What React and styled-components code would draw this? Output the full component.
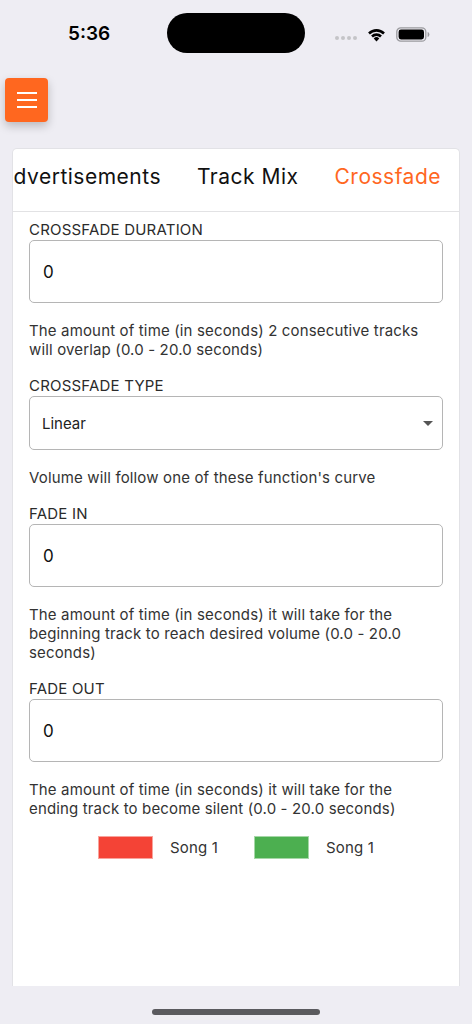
import styled, { createGlobalStyle } from 'styled-components'

const GlobalStyle = createGlobalStyle`
  body {
    margin: 0;
    background: #EEEDF3;
    font-family: Inter, "Noto Sans", sans-serif;
  }
`

const fields = [
  { label: 'CROSSFADE DURATION', value: '0', help: 'The amount of time (in seconds) 2 consecutive tracks will overlap (0.0 - 20.0 seconds)' },
  { label: 'CROSSFADE TYPE', value: 'Linear', select: true, help: "Volume will follow one of these function's curve" },
  { label: 'FADE IN', value: '0', help: 'The amount of time (in seconds) it will take for the beginning track to reach desired volume (0.0 - 20.0 seconds)' },
  { label: 'FADE OUT', value: '0', help: 'The amount of time (in seconds) it will take for the ending track to become silent (0.0 - 20.0 seconds)' },
]

// the tab strip is scrolled to its end, so the first tab is clipped on the left
const tabs = ['Advertisements', 'Track Mix', 'Crossfade']

function WifiIcon() {
  return (
    <svg width="21" height="15" viewBox="0 0 20 15">
      <path d="M10 14.5 L7.2 11.4 A4 4 0 0 1 12.8 11.4 Z" fill="#000" />
      <path d="M4.6 8.6 A7.6 7.6 0 0 1 15.4 8.6 L13.6 10.5 A5 5 0 0 0 6.4 10.5 Z" fill="#000" />
      <path d="M1.6 5.6 A11.8 11.8 0 0 1 18.4 5.6 L16.6 7.5 A9.2 9.2 0 0 0 3.4 7.5 Z" fill="#000" />
    </svg>
  )
}

function BatteryIcon() {
  return (
    <svg width="34" height="15" viewBox="0 0 34 15">
      <rect x="0.8" y="0.8" width="29" height="13.4" rx="4" fill="none" stroke="#9a9a9e" strokeWidth="1.3" />
      <rect x="2.6" y="2.6" width="25.4" height="9.8" rx="2.4" fill="#000" />
      <path d="M31.6 5 Q33.4 5.4 33.4 7.5 Q33.4 9.6 31.6 10 Z" fill="#9a9a9e" />
    </svg>
  )
}

function App() {
  return (
    <>
      <GlobalStyle />
      <Screen>
        <StatusBar>
          <Time>5:36</Time>
          <Island />
          <StatusIcons>
            <Dots>
              <Dot /><Dot /><Dot /><Dot />
            </Dots>
            <WifiIcon />
            <BatteryIcon />
          </StatusIcons>
        </StatusBar>

        <MenuButton>
          <MenuLine /><MenuLine /><MenuLine />
        </MenuButton>

        <Card>
          <TabBar>
            {tabs.map(it => (
              <Tab key={it} $active={it === 'Crossfade'}>{it}</Tab>
            ))}
          </TabBar>

          <Form>
            {fields.map(it => (
              <FieldGroup key={it.label}>
                <Label>{it.label}</Label>
                {it.select ? (
                  <SelectBox>
                    <SelectText>{it.value}</SelectText>
                    <Caret />
                  </SelectBox>
                ) : (
                  <InputBox>{it.value}</InputBox>
                )}
                <HelpText>{it.help}</HelpText>
              </FieldGroup>
            ))}

            <Legend>
              <LegendItem>
                <Swatch $color="#F44336" $border="#f8a39c" />
                <LegendText>Song 1</LegendText>
              </LegendItem>
              <LegendItem>
                <Swatch $color="#4CAF50" $border="#a5d7a7" />
                <LegendText>Song 1</LegendText>
              </LegendItem>
            </Legend>
          </Form>
        </Card>

        <HomeIndicator />
      </Screen>
    </>
  )
}

export default App;

const Screen = styled.div`
  width: 472px;
  height: 1024px;
  display: flex;
  flex-direction: column;
  overflow: hidden;
`

const StatusBar = styled.div`
  display: flex;
  align-items: center;
  padding-top: 13px;
  height: 40px;
`

const Time = styled.div`
  width: 167px;
  box-sizing: border-box;
  padding-left: 68px;
  font-size: 19px;
  font-weight: 600;
  color: #000;
`

const Island = styled.div`
  width: 138px;
  height: 40px;
  border-radius: 20px;
  background: #000;
`

const StatusIcons = styled.div`
  display: flex;
  align-items: center;
  padding-left: 30px;
  padding-top: 2px;
  gap: 9px;
`

const Dots = styled.div`
  display: flex;
  gap: 2px;
  padding-top: 8px;
`

const Dot = styled.span`
  width: 4px;
  height: 4px;
  border-radius: 2px;
  background: #c4c4c8;
`

const MenuButton = styled.div`
  margin: 25px 0 0 5px;
  width: 43px;
  height: 44px;
  border-radius: 4px;
  background: #FF671F;
  box-shadow: 0 4px 10px rgba(0, 0, 0, 0.22);
  display: flex;
  flex-direction: column;
  align-items: center;
  justify-content: center;
  gap: 5px;
`

const MenuLine = styled.span`
  width: 20px;
  height: 2px;
  background: #fff;
`

const Card = styled.div`
  margin: 26px 12px 0;
  height: 838px;
  background: #fff;
  border: 1px solid #e2e2e6;
  border-bottom: none;
  border-radius: 5px 5px 0 0;
  box-sizing: border-box;
  overflow: hidden;
`

const TabBar = styled.div`
  display: flex;
  justify-content: flex-end;
  align-items: center;
  height: 63px;
  box-sizing: border-box;
  padding-bottom: 8px;
  border-bottom: 1px solid #e2e2e4;
  overflow: hidden;
`

const Tab = styled.div`
  flex-shrink: 0;
  padding: 0 18px;
  font-size: 21px;
  letter-spacing: 0.5px;
  color: ${p => p.$active ? '#FF671F' : '#111'};
`

const Form = styled.div`
  padding: 9px 16px 0;
  display: flex;
  flex-direction: column;
  gap: 18px;
`

const FieldGroup = styled.div`
  display: flex;
  flex-direction: column;
`

const Label = styled.div`
  font-size: 15px;
  line-height: 17px;
  letter-spacing: 0.2px;
  color: #2b2b2b;
  margin-bottom: 2px;
`

const InputBox = styled.div`
  height: 63px;
  flex-shrink: 0;
  box-sizing: border-box;
  border: 1px solid #b5b5b5;
  border-radius: 5px;
  display: flex;
  align-items: center;
  padding-left: 13px;
  font-size: 17px;
  color: #111;
`

const SelectBox = styled.div`
  height: 54px;
  flex-shrink: 0;
  box-sizing: border-box;
  border: 1px solid #b5b5b5;
  border-radius: 5px;
  display: flex;
  align-items: center;
  justify-content: space-between;
  padding: 0 9px 0 12px;
`

const SelectText = styled.span`
  font-size: 15px;
  color: #222;
`

const Caret = styled.span`
  width: 0;
  height: 0;
  border-left: 5px solid transparent;
  border-right: 5px solid transparent;
  border-top: 5px solid #555;
`

const HelpText = styled.div`
  margin-top: 18px;
  padding-right: 12px;
  font-size: 15px;
  line-height: 19px;
  letter-spacing: 0.15px;
  color: #333;
`

const Legend = styled.div`
  display: flex;
  justify-content: center;
  gap: 36px;
`

const LegendItem = styled.div`
  display: flex;
  align-items: center;
  gap: 17px;
`

const Swatch = styled.span`
  width: 55px;
  height: 23px;
  box-sizing: border-box;
  background: ${p => p.$color};
  border: 1px solid ${p => p.$border};
`

const LegendText = styled.span`
  font-size: 15px;
  letter-spacing: 0.15px;
  color: #333;
`

const HomeIndicator = styled.div`
  margin: 23px auto 0;
  width: 168px;
  height: 6px;
  border-radius: 3px;
  background: #5a5a5e;
`
